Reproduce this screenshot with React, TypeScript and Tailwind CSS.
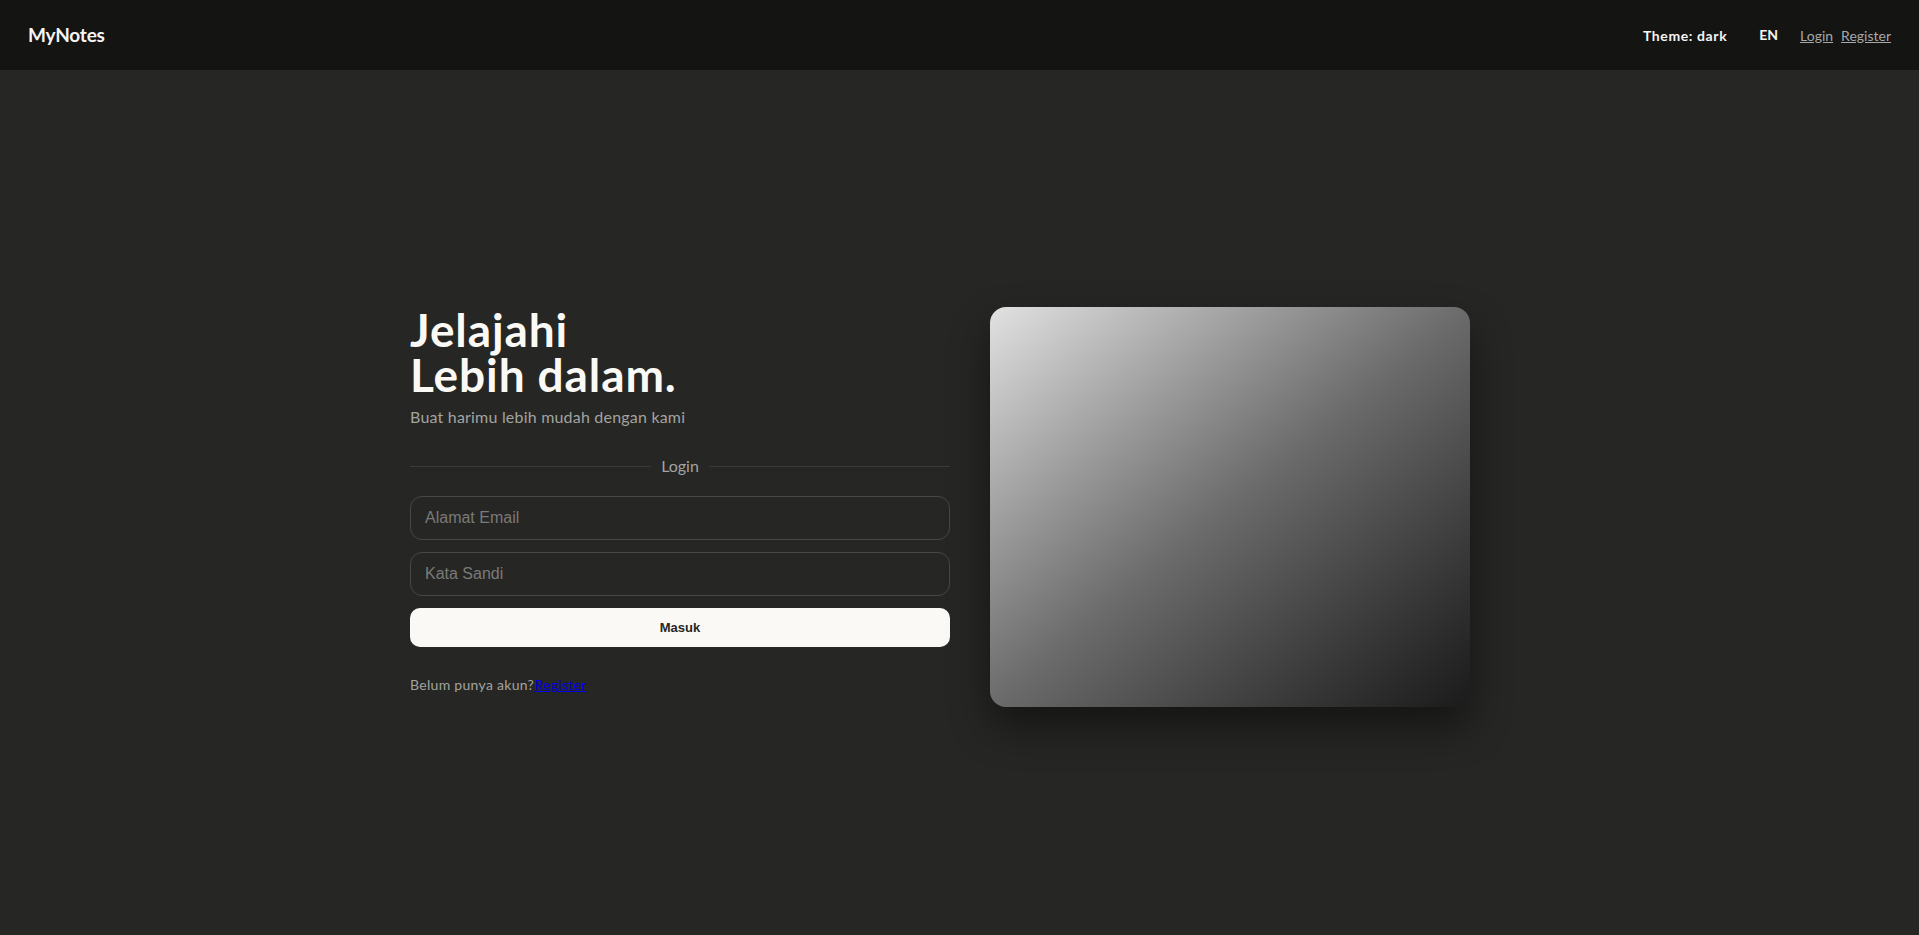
const App = () => {
  return (
    <div className="min-h-screen w-full bg-[#262624] font-['Lato','Noto_Sans',sans-serif]">
      <header className="h-[70px] w-full bg-[#141413] flex items-center justify-between px-7">
        <h1 className="text-[19px] font-bold text-[#f5f5f3] tracking-[-0.2px]">MyNotes</h1>
        <nav className="flex items-center text-[14px]">
          <button className="font-bold text-[#f5f5f3] tracking-[0.6px] mr-8">Theme: dark</button>
          <span className="font-bold text-[#f5f5f3] mr-[22px] -mt-[2px]">EN</span>
          <a href="#" className="text-[#a8a8a8] underline mr-2">Login</a>
          <a href="#" className="text-[#a8a8a8] underline">Register</a>
        </nav>
      </header>

      <main className="h-[865px] w-full pt-[237px] pl-[410px]">
        <div className="flex items-start gap-10">
          <section className="w-[540px] flex flex-col">
            <h2 className="text-[46px] leading-[45px] font-bold text-[#faf9f5] tracking-[0.9px]">
              <span className="block">Jelajahi</span>
              <span className="block">Lebih dalam.</span>
            </h2>
            <p className="mt-[8px] text-[16px] text-[#a3a3a0] tracking-[0.2px]">Buat harimu lebih mudah dengan kami</p>

            <div className="mt-[25px] flex items-center gap-[10px]">
              <div className="flex-1 h-px bg-[#3a3a38]" />
              <span className="text-[16px] text-[#a3a3a0]">Login</span>
              <div className="flex-1 h-px bg-[#3a3a38]" />
            </div>

            <form className="mt-[18px] flex flex-col gap-[12px] font-['Liberation_Sans',Arial,sans-serif]">
              <input
                type="email"
                placeholder="Alamat Email"
                className="h-[44px] w-full rounded-[12px] border border-[#474745] bg-transparent px-[14px] text-[16px] text-[#eee] placeholder:text-[#7a7a78] outline-none"
              />
              <input
                type="password"
                placeholder="Kata Sandi"
                className="h-[44px] w-full rounded-[12px] border border-[#474745] bg-transparent px-[14px] text-[16px] text-[#eee] placeholder:text-[#7a7a78] outline-none"
              />
              <button
                type="button"
                className="h-[39px] w-full rounded-[10px] bg-[#faf9f5] text-[13px] font-bold text-[#262624]"
              >
                Masuk
              </button>
            </form>

            <p className="mt-[27px] text-[14px] text-[#a3a3a0] tracking-[0.3px]">
              Belum punya akun?<a href="#" className="text-[#0000ee] underline">Register</a>
            </p>
          </section>

          <div className="w-[480px] h-[400px] rounded-[16px] bg-gradient-to-br from-[#e2e2e2] via-[#6b6b6b] to-[#1b1b1b] shadow-[0_20px_40px_rgba(0,0,0,0.45)]" />
        </div>
      </main>
    </div>
  );
};

export default App;
